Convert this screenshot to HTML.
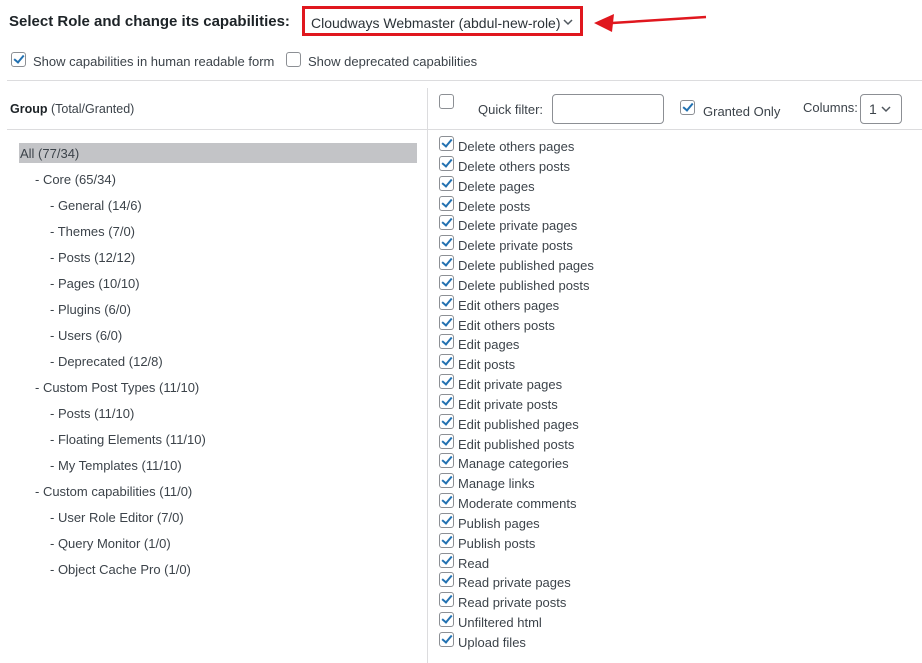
<!DOCTYPE html>
<html><head><meta charset="utf-8"><style>
body{margin:0;width:922px;height:663px;background:#fff;font-family:"Liberation Sans",sans-serif;font-size:13px;color:#3c434a;position:relative;overflow:hidden}
.a{position:absolute;white-space:nowrap}
.cb{position:absolute;width:15px;height:15px;border:1px solid #8c8f94;border-radius:3px;background:#fff;box-sizing:border-box}
.cb.on::after{content:"";position:absolute;left:4px;top:0px;width:4px;height:8px;border:solid #2271b1;border-width:0 2px 2px 0;transform:rotate(40deg)}
</style></head><body>
<div class="a" style="left:9px;top:13px;font-size:15px;font-weight:bold;color:#1d2327">Select Role and change its capabilities:</div>
<div class="a" style="left:302px;top:6px;width:281px;height:30px;border:3px solid #e0171e;box-sizing:border-box"></div>
<div class="a" style="left:311px;top:15px;font-size:14px;color:#2c3338">Cloudways Webmaster (abdul-new-role)</div>
<svg class="a" style="left:562px;top:17px" width="12" height="10"><path d="M2 3l4 4 4-4" stroke="#50575e" stroke-width="1.5" fill="none"/></svg>
<svg class="a" style="left:592px;top:10px" width="116" height="24"><path d="M114 7L20 13" stroke="#e0171e" stroke-width="2.5"/><path d="M2 13L22 4 20 22z" fill="#e0171e"/></svg>
<div class="cb on" style="left:11px;top:52px"></div>
<div class="a" style="left:33px;top:54px">Show capabilities in human readable form</div>
<div class="cb" style="left:286px;top:52px"></div>
<div class="a" style="left:308px;top:54px">Show deprecated capabilities</div>
<div class="a" style="left:7px;top:80px;width:915px;height:1px;background:#dcdcde"></div>
<div class="a" style="left:7px;top:129px;width:915px;height:1px;background:#dcdcde"></div>
<div class="a" style="left:427px;top:88px;width:1px;height:575px;background:#dcdcde"></div>
<div class="a" style="left:10px;top:102px;font-size:12.5px"><b style="color:#1d2327">Group</b> (Total/Granted)</div>
<div class="cb" style="left:439px;top:94px"></div>
<div class="a" style="left:478px;top:102px">Quick filter:</div>
<div class="a" style="left:552px;top:94px;width:112px;height:30px;border:1px solid #8c8f94;border-radius:4px;box-sizing:border-box"></div>
<div class="cb on" style="left:680px;top:100px"></div>
<div class="a" style="left:703px;top:104px">Granted Only</div>
<div class="a" style="left:803px;top:100px">Columns:</div>
<div class="a" style="left:860px;top:94px;width:42px;height:30px;border:1px solid #8c8f94;border-radius:4px;box-sizing:border-box"></div>
<div class="a" style="left:869px;top:101px;font-size:14px">1</div>
<svg class="a" style="left:880px;top:104px" width="12" height="10"><path d="M2 3l4 4 4-4" stroke="#50575e" stroke-width="1.5" fill="none"/></svg>
<div class="a" style="left:19px;top:143px;width:398px;height:20px;background:#c3c4c7"></div>
<div id="L"></div><div id="R"></div>
<script>
var l=[[20,"All (77/34)"],[35,"- Core (65/34)"],[50,"- General (14/6)"],[50,"- Themes (7/0)"],[50,"- Posts (12/12)"],[50,"- Pages (10/10)"],[50,"- Plugins (6/0)"],[50,"- Users (6/0)"],[50,"- Deprecated (12/8)"],[35,"- Custom Post Types (11/10)"],[50,"- Posts (11/10)"],[50,"- Floating Elements (11/10)"],[50,"- My Templates (11/10)"],[35,"- Custom capabilities (11/0)"],[50,"- User Role Editor (7/0)"],[50,"- Query Monitor (1/0)"],[50,"- Object Cache Pro (1/0)"]];
var h="";l.forEach(function(e,i){h+='<div class="a" style="left:'+e[0]+'px;top:'+(146+i*26)+'px">'+e[1]+'</div>'});
var r=["Delete others pages","Delete others posts","Delete pages","Delete posts","Delete private pages","Delete private posts","Delete published pages","Delete published posts","Edit others pages","Edit others posts","Edit pages","Edit posts","Edit private pages","Edit private posts","Edit published pages","Edit published posts","Manage categories","Manage links","Moderate comments","Publish pages","Publish posts","Read","Read private pages","Read private posts","Unfiltered html","Upload files"];
r.forEach(function(t,i){var y=Math.round(139+i*19.84);h+='<div class="cb on" style="left:439px;top:'+(y-3)+'px"></div><div class="a" style="left:458px;top:'+y+'px">'+t+'</div>'});
document.getElementById("L").innerHTML=h;
</script>
</body></html>
